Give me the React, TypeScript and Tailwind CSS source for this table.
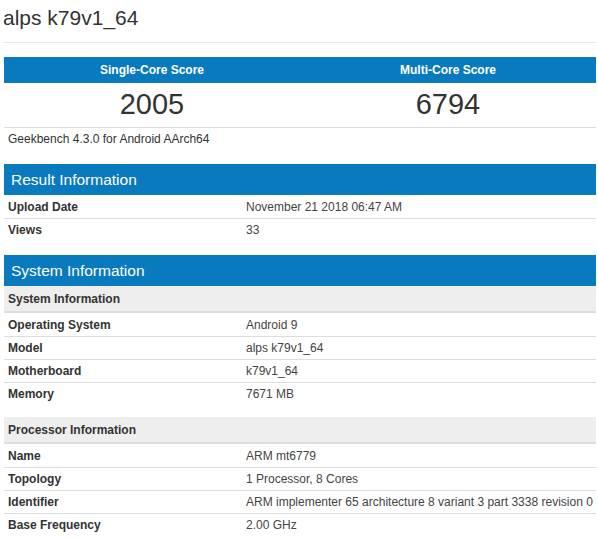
const font = { fontFamily: '"Liberation Sans", Arial, sans-serif' }

type Row = [string, string]

const resultRows: Row[] = [
  ['Upload Date', 'November 21 2018 06:47 AM'],
  ['Views', '33'],
]

const systemRows: Row[] = [
  ['Operating System', 'Android 9'],
  ['Model', 'alps k79v1_64'],
  ['Motherboard', 'k79v1_64'],
  ['Memory', '7671 MB'],
]

const processorRows: Row[] = [
  ['Name', 'ARM mt6779'],
  ['Topology', '1 Processor, 8 Cores'],
  ['Identifier', 'ARM implementer 65 architecture 8 variant 3 part 3338 revision 0'],
  ['Base Frequency', '2.00 GHz'],
]

function Rows({ rows }: { rows: Row[] }) {
  return (
    <div>
      {rows.map(([label, value], i) => (
        <div
          key={label}
          className={`flex h-[23px] items-center text-[12px] ${i > 0 ? 'border-t border-[#dddddd]' : ''}`}
        >
          <div className="w-[242px] shrink-0 pl-[4px] font-bold text-[#333333]">{label}</div>
          <div className="text-[#444444]">{value}</div>
        </div>
      ))}
    </div>
  )
}

function SubHeader({ title }: { title: string }) {
  return (
    <div className="flex h-[27px] items-center border-b-2 border-[#dddddd] bg-[#eeeeee] pl-[4px] text-[12px] font-bold text-[#333333]">
      {title}
    </div>
  )
}

function BlueHeader({ title }: { title: string }) {
  return (
    <div className="flex h-[31px] items-center bg-[#0a7abf] pl-[7px] text-[15.5px] text-white">
      {title}
    </div>
  )
}

export default function App() {
  return (
    <div className="h-[539px] w-[598px] overflow-hidden bg-white pl-[4px] pr-[2px]" style={font}>
      <div className="flex h-[43px] items-center border-b border-[#e5e5e5] pb-[6px] text-[21px] text-[#333333]">
        <span className="-ml-[1px]">alps k79v1_64</span>
      </div>

      <div className="mt-[14px]">
        <div className="grid h-[26px] grid-cols-2 items-center bg-[#0a7abf] text-[12px] font-bold text-white">
          <div className="text-center">Single-Core Score</div>
          <div className="text-center">Multi-Core Score</div>
        </div>
        <div className="grid h-[45px] grid-cols-2 items-center border-b border-[#dddddd] text-[29px] text-[#333333]">
          <div className="pb-[2px] text-center">2005</div>
          <div className="pb-[2px] text-center">6794</div>
        </div>
        <div className="flex h-[22px] items-center pl-[4px] text-[12px] text-[#333333]">
          Geekbench 4.3.0 for Android AArch64
        </div>
      </div>

      <div className="mt-[14px]">
        <BlueHeader title="Result Information" />
        <Rows rows={resultRows} />
      </div>

      <div className="mt-[14px]">
        <BlueHeader title="System Information" />
        <SubHeader title="System Information" />
        <Rows rows={systemRows} />
      </div>

      <div className="mt-[12px]">
        <SubHeader title="Processor Information" />
        <Rows rows={processorRows} />
      </div>
    </div>
  )
}
